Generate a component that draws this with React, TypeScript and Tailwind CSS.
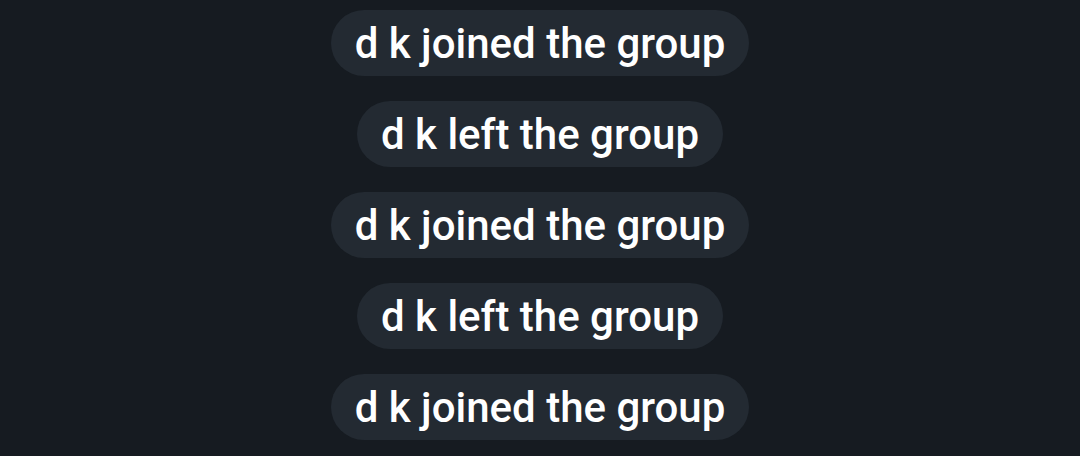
const events = [
  "d k joined the group",
  "d k left the group",
  "d k joined the group",
  "d k left the group",
  "d k joined the group",
];

export default function App() {
  return (
    <div className="w-[1080px] h-[456px] overflow-hidden bg-[#161b21] flex flex-col items-center pt-[10px] gap-[25px] font-['Roboto',sans-serif]">
      {events.map((text, i) => (
        <div
          key={i}
          className="h-[66px] px-6 rounded-full bg-[#232a32] flex items-center text-white text-[42px] font-medium"
        >
          {text}
        </div>
      ))}
    </div>
  );
}
